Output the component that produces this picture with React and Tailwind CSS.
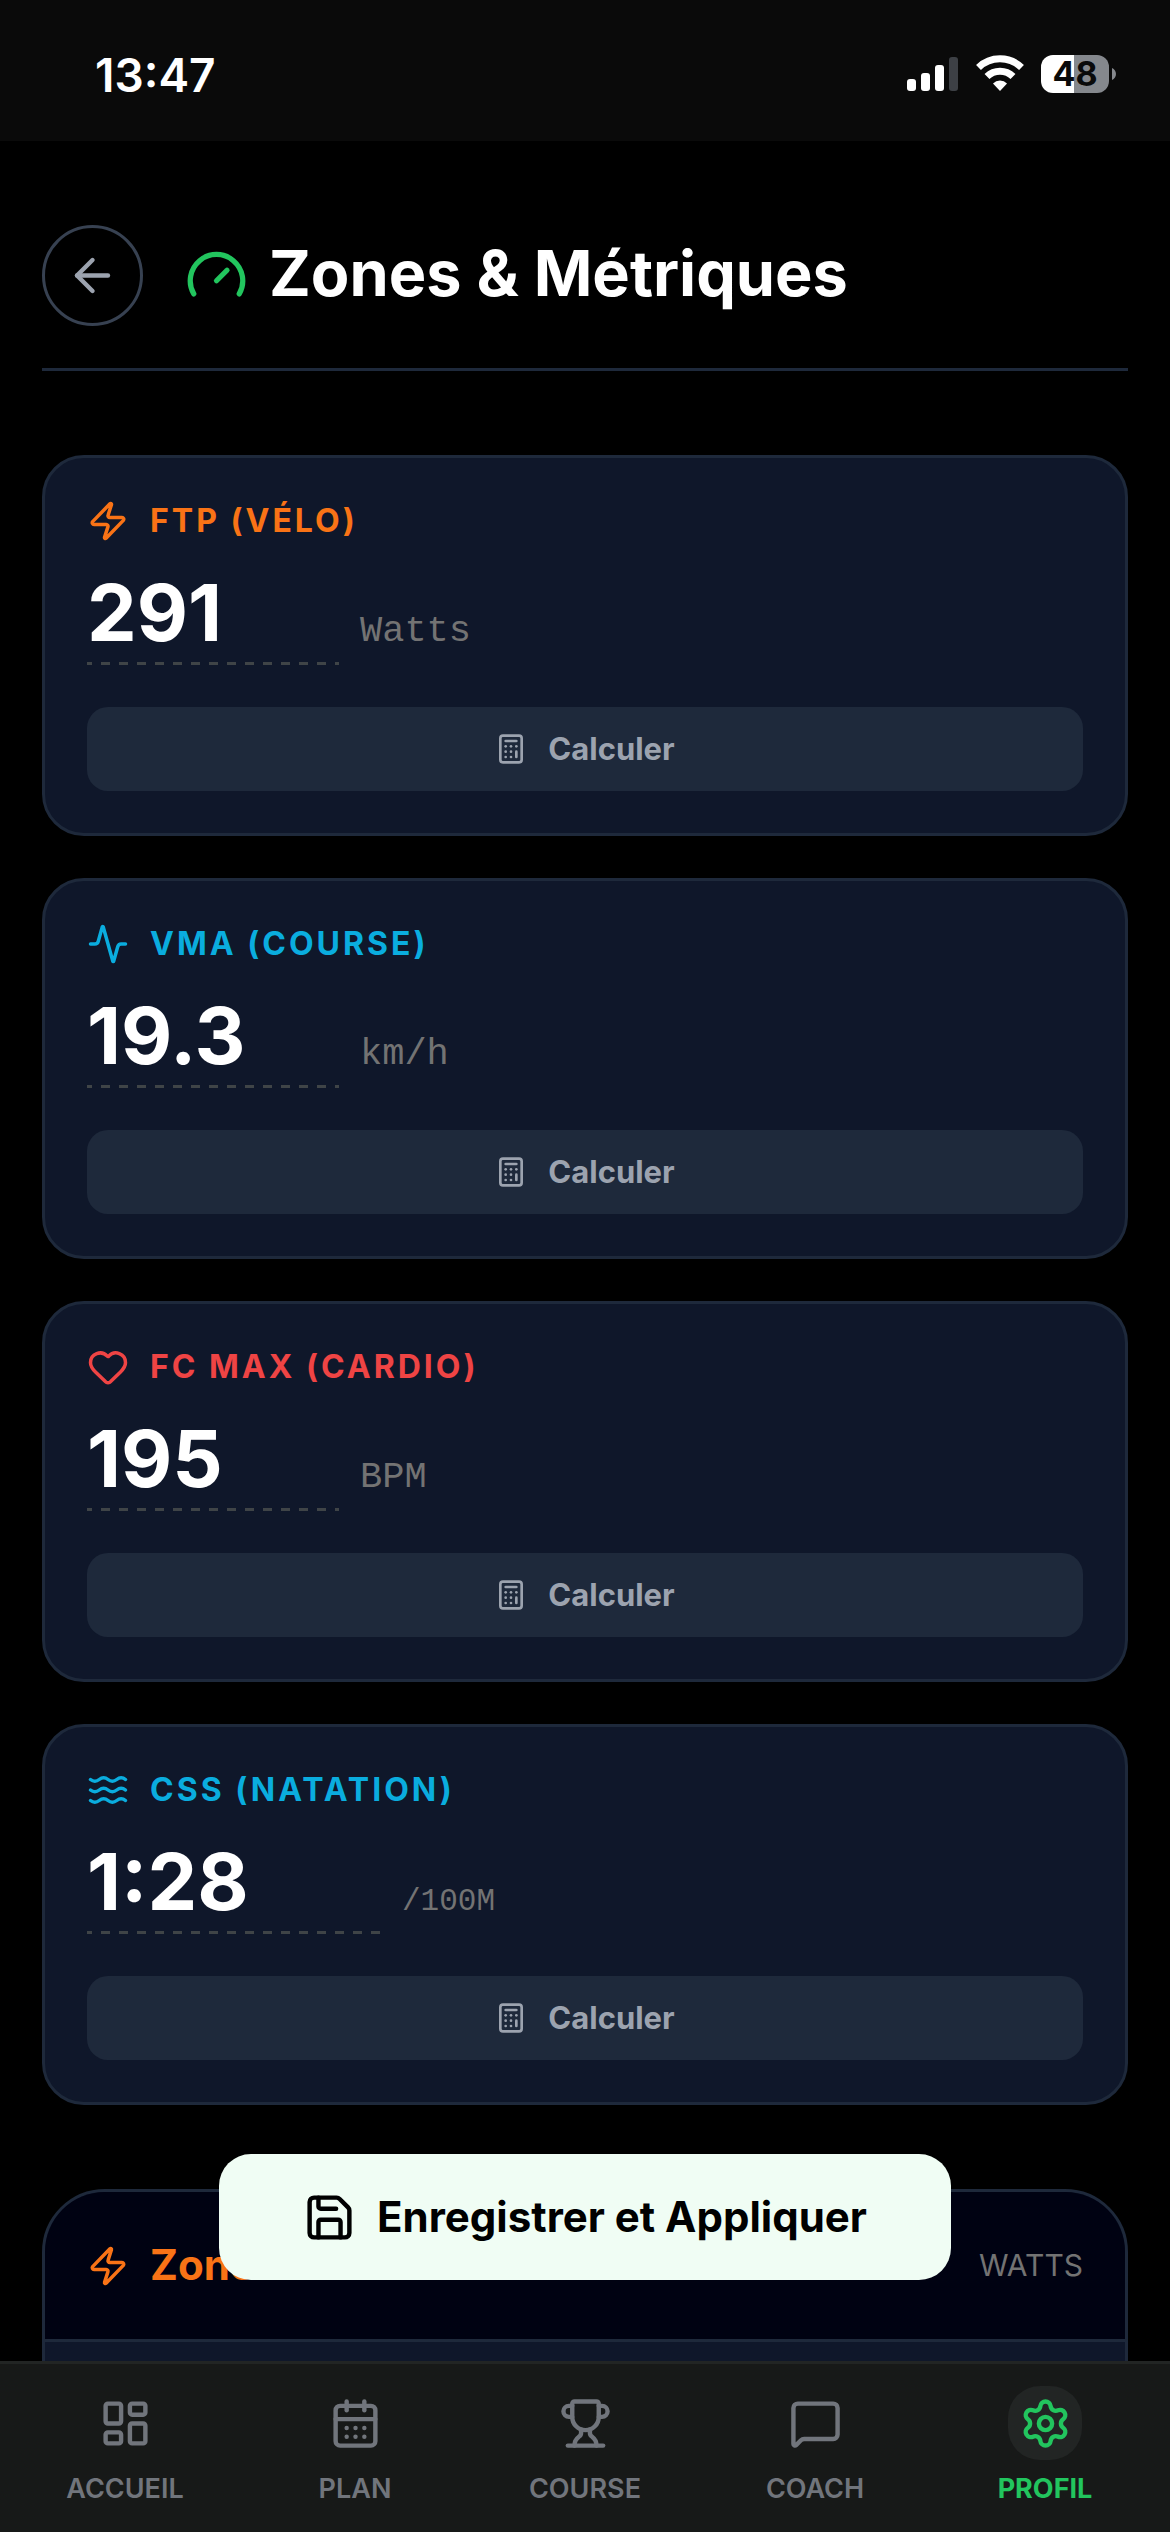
import React from "react";
import {
  Activity,
  ArrowLeft,
  Calculator,
  CalendarDays,
  Gauge,
  Heart,
  LayoutDashboard,
  MessageSquare,
  Save,
  Settings,
  Trophy,
  Waves,
  Zap,
} from "lucide-react";

const metrics = [
  { id: "ftp", label: "FTP (VÉLO)", value: "291", unit: "Watts", Icon: Zap, tone: "text-[#f97316]", field: "w-[252px]", unitSize: "text-[37px]" },
  { id: "vma", label: "VMA (COURSE)", value: "19.3", unit: "km/h", Icon: Activity, tone: "text-[#0aaddf]", field: "w-[252px]", unitSize: "text-[37px]" },
  { id: "fcmax", label: "FC MAX (CARDIO)", value: "195", unit: "BPM", Icon: Heart, tone: "text-[#ef4444]", field: "w-[252px]", unitSize: "text-[37px]" },
  { id: "css", label: "CSS (NATATION)", value: "1:28", unit: "/100M", Icon: Waves, tone: "text-[#0aaddf]", field: "w-[294px]", unitSize: "text-[31px]" },
];

const tabs = [
  { label: "ACCUEIL", Icon: LayoutDashboard },
  { label: "PLAN", Icon: CalendarDays },
  { label: "COURSE", Icon: Trophy },
  { label: "COACH", Icon: MessageSquare },
  { label: "PROFIL", Icon: Settings, active: true },
];

function StatusBar() {
  return (
    <div className="flex h-[141px] shrink-0 items-center justify-between bg-[#0a0a0a] pl-[95px] pr-[54px] pt-[6px]">
      <span className="pt-[2px] text-[46px] leading-[54px] font-semibold">13:47</span>
      <div className="flex items-center gap-4">
        <svg className="h-[38px] w-[52px]" viewBox="0 0 52 38" fill="#fff" aria-hidden="true">
          <rect x="0" y="24" width="9" height="12" rx="3" />
          <rect x="14" y="18" width="9" height="18" rx="3" />
          <rect x="28" y="10" width="9" height="26" rx="3" />
          <rect x="42" y="2" width="9" height="34" rx="3" fill="#3d4045" />
        </svg>
        <svg className="h-[38px] w-[50px]" viewBox="0 0 50 38" fill="none" stroke="#fff" strokeWidth="7" aria-hidden="true">
          <path d="M3.500 12.500a31 31 0 0 1 43 0" />
          <path d="M12 21.500a18.500 18.500 0 0 1 26 0" />
          <path d="M25 36l-7-7.500a9.800 9.800 0 0 1 14 0z" fill="#fff" stroke="none" />
        </svg>
        <div className="flex items-center gap-[3px]">
          <div className="flex h-[38px] w-[68px] items-center justify-center rounded-[12px] bg-linear-to-r from-white from-49% to-[#85888d] to-49% text-[34px] leading-[38px] font-bold text-[#0a0a0a]">
            48
          </div>
          <svg className="h-[12px] w-[4px]" viewBox="0 0 4 12" fill="#85888d" aria-hidden="true">
            <path d="M0 0c2.500 1 4 3.500 4 6s-1.500 5-4 6z" />
          </svg>
        </div>
      </div>
    </div>
  );
}

function MetricCard({ id, label, value, unit, Icon, tone, field, unitSize }) {
  return (
    <section className="rounded-[42px] border-[3px] border-[#1e293b] bg-[#0f172a] p-[42px]">
      <label htmlFor={id} className={`mb-[21px] flex h-[42px] items-center gap-[21px] text-[32px] font-bold tracking-[3px] ${tone}`}>
        <Icon className="size-[42px]" />
        {label}
      </label>
      <div className="mb-[42px] flex items-baseline gap-[21px]">
        <input
          id={id}
          defaultValue={value}
          className={`h-[102px] bg-[linear-gradient(90deg,#3f4447_50%,transparent_50%)] bg-[length:18px_3px] bg-[position:-4px_100%] bg-repeat-x pb-[3px] text-[79px] font-bold text-white outline-none ${field}`}
        />
        <span className={`font-['Liberation_Mono',monospace] text-[#737373] ${unitSize}`}>{unit}</span>
      </div>
      <button type="button" className="flex h-[84px] w-full items-center justify-center gap-[21px] rounded-[21px] bg-[#1e293b] text-[31px] font-bold text-[#9ca3af]">
        <Calculator className="size-[32px]" />
        Calculer
      </button>
    </section>
  );
}

export default function App() {
  return (
    <div className="flex h-screen flex-col overflow-hidden bg-black font-[Inter,sans-serif] text-white">
      <StatusBar />
      <div className="relative min-h-0 flex-1">
        <main className="h-full overflow-hidden px-[42px] pt-[84px]">
          <header className="mb-[84px] flex items-center gap-[42px] border-b-[3px] border-[#1e293b] pb-[42px]">
            <button type="button" aria-label="Retour" className="flex size-[101px] items-center justify-center rounded-full border-[3px] border-[#374151] text-[#9ca3af]">
              <ArrowLeft className="size-[53px]" />
            </button>
            <h1 className="flex items-center gap-[21px] text-[63px] leading-[84px] font-bold">
              <Gauge className="size-[63px] text-[#22c55e]" />
              <span className="pb-[5px]">Zones &amp; Métriques</span>
            </h1>
          </header>
          <div className="flex flex-col gap-[42px]">
            {metrics.map((m) => (
              <MetricCard key={m.id} {...m} />
            ))}
          </div>
          <section className="mt-[84px] h-[600px] overflow-hidden rounded-[63px] border-[3px] border-[#1e293b] bg-[#0f172a]">
            <div className="flex h-[150px] items-center justify-between border-b-[3px] border-[#1e293b] bg-[#000212] px-[42px]">
              <h2 className="flex items-center gap-[21px] text-[42px] font-bold text-[#f97316]">
                <Zap className="size-[42px]" />
                <span className="pb-[2px]">Zones</span>
              </h2>
              <span className="text-[30px] text-[#737373]">WATTS</span>
            </div>
          </section>
        </main>
        <div className="pointer-events-none absolute inset-x-0 bottom-[81px] flex justify-center">
          <button type="button" className="pointer-events-auto flex h-[126px] items-center gap-[21px] rounded-[32px] bg-[#f0fdf4] px-[84px] text-[42px] font-bold text-black">
            <Save className="size-[53px]" />
            <span className="pb-[2px]">Enregistrer et Appliquer</span>
          </button>
        </div>
      </div>
      <nav className="grid h-[171px] shrink-0 grid-cols-5 border-t-[3px] border-[#222524] bg-[#171918] px-[10px] pt-[22px]">
        {tabs.map(({ label, Icon, active }) => (
          <a
            key={label}
            href={"#" + label.toLowerCase()}
            className={`flex flex-col items-center gap-[11px] text-[27px] leading-[36px] ${active ? "font-bold text-[#22c55e]" : "font-semibold text-[#71757c]"}`}
          >
            <span className={`flex size-[74px] items-center justify-center rounded-[32px] ${active ? "bg-[#222524]" : ""}`}>
              <Icon className="size-[53px]" />
            </span>
            {label}
          </a>
        ))}
      </nav>
    </div>
  );
}
